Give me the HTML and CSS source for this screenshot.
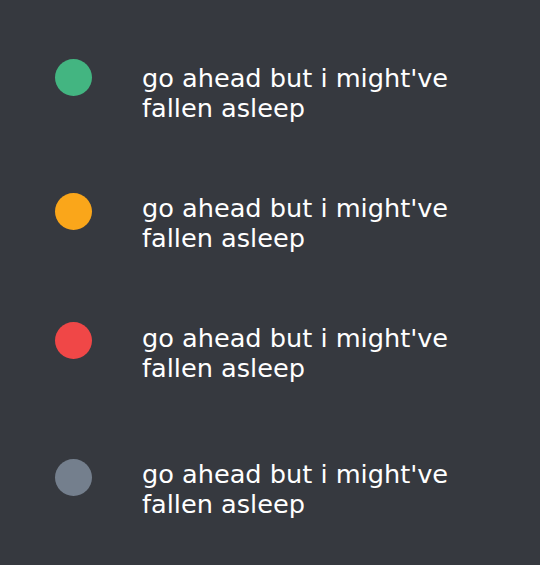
FILE: index.html
```html
<!DOCTYPE html>
<html>
<head>
<meta charset="utf-8">
<link rel="stylesheet" href="styles.css">
</head>
<body>
<div class="list">
  <div class="row row-online"><span class="dot online"></span><p class="label">go ahead but i might've fallen asleep</p></div>
  <div class="row row-idle"><span class="dot idle"></span><p class="label">go ahead but i might've fallen asleep</p></div>
  <div class="row row-dnd"><span class="dot dnd"></span><p class="label">go ahead but i might've fallen asleep</p></div>
  <div class="row row-offline"><span class="dot offline"></span><p class="label">go ahead but i might've fallen asleep</p></div>
</div>
</body>
</html>
```
FILE: styles.css
```css
html, body {
  margin: 0;
  padding: 0;
  background: #36393f;
  width: 540px;
  height: 565px;
  overflow: hidden;
}
.list {
  display: flex;
  flex-direction: column;
  padding: 59px 0 0 55px;
}
.row {
  display: flex;
  align-items: flex-start;
}
.row-online .label { margin-top: 4px; }
.row-idle { margin-top: 70px; }
.row-dnd { margin-top: 69px; }
.row-dnd .label { margin-top: 1px; }
.row-offline { margin-top: 76px; }
.dot {
  flex: none;
  width: 37px;
  height: 37px;
  border-radius: 50%;
}
.online { background: #43b581; }
.idle { background: #faa61a; }
.dnd { background: #f04747; }
.offline { background: #747f8d; }
.label {
  margin: 0 0 0 50px;
  width: 340px;
  font-family: "DejaVu Sans", sans-serif;
  font-size: 25.6px;
  line-height: 30px;
  color: #ffffff;
}
```
